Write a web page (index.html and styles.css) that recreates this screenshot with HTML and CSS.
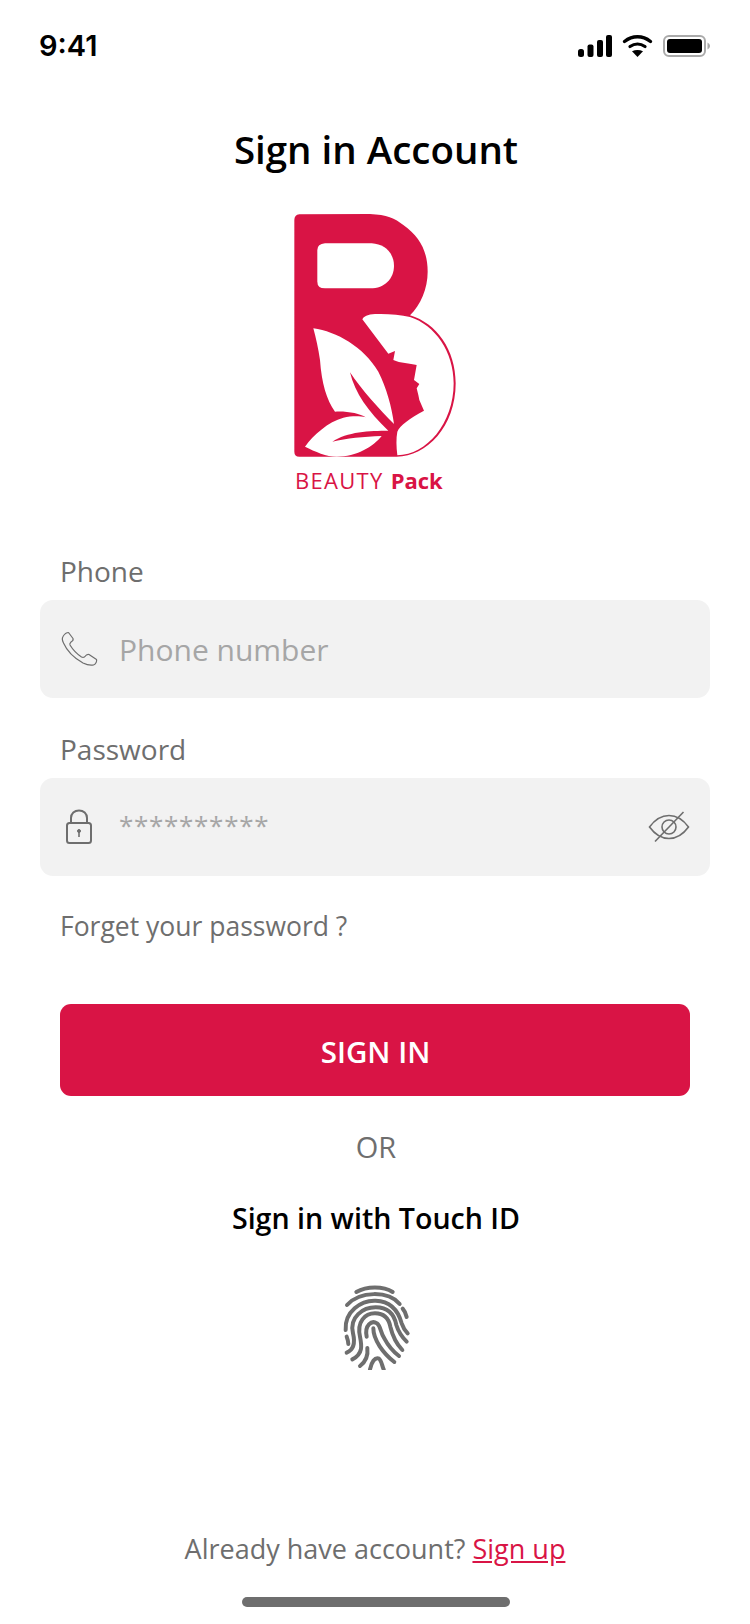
FILE: index.html
```html
<!DOCTYPE html>
<html lang="en">
<head>
<meta charset="utf-8">
<title>Sign in Account</title>
<link rel="stylesheet" href="styles.css">
</head>
<body>
<main class="screen">
  <header class="status">
    <span class="time">9:41</span>
    <span class="status-icons">
      <svg width="34" height="22" viewBox="0 0 34 22"><rect x="0" y="14" width="6" height="8" rx="2.500"/><rect x="9.500" y="9.500" width="6" height="12.500" rx="2"/><rect x="19" y="5" width="6" height="17" rx="2"/><rect x="28" y="0" width="6" height="22" rx="2"/></svg>
      <svg width="31" height="22" viewBox="0 0 31 22"><path d="M2.500 6.500C7 3 11 1.800 15.500 1.800S24 3 28.500 6.500" fill="none" stroke="#000" stroke-width="3.400" stroke-linecap="round"/><path d="M8 11.500C10.500 9.800 13 9 15.500 9S20.500 9.800 23 11.500" fill="none" stroke="#000" stroke-width="3.200" stroke-linecap="round"/><path d="M10 16.200L15.500 22L21 16.200C17.500 14.600 13.500 14.600 10 16.200Z"/></svg>
      <svg width="47" height="22" viewBox="0 0 47 22"><rect x="1" y="1" width="41" height="20" rx="5" fill="none" stroke="#aaa" stroke-width="2"/><rect x="4" y="4" width="35" height="14" rx="3"/><path d="M44.500 7.500v7c1.500-.7 2.500-2 2.500-3.500s-1-2.800-2.500-3.500Z" fill="#aaa"/></svg>
    </span>
  </header>

  <h1 class="title">Sign in Account</h1>

  <div class="logo">
    <svg width="230" height="300" viewBox="0 0 690 900">
      <path fill="#d91445" d="M118 43L330 42C380 44 405 55 430 75C480 110 503 155 503 215C503 265 482 315 450 346C530 370 587 450 587 550C587 680 500 770 410 770L118 770Q103 770 103 755L103 60Q103 45 118 43Z"/>
      <path fill="#fff" d="M195 130L335 130C375 132 402 160 402 197C402 235 375 265 330 265L195 265Q172 265 172 245L172 150Q172 132 195 130Z"/>
      <path fill="#fff" d="M307 358Q312 344 345 342C380 341 420 343 450 351C525 375 581 455 581 550C581 670 500 765 412 766C409 740 408 715 412 695C420 675 450 655 492 632L478 600L475 585L470 565L478 552L462 540L470 495C450 490 420 490 400 480L405 453L385 461Z"/>
      <path fill="#fff" transform="translate(120 330)" d="M40 55C110 65 190 110 235 185C260 235 275 290 282 342C240 300 185 240 150 187C165 250 205 305 265 362C210 362 140 365 97 395C140 385 190 380 245 378C220 410 170 440 110 440C80 440 45 425 15 410C40 375 85 335 130 323C155 318 180 318 197 322C180 310 140 303 105 305C80 270 65 220 60 150C55 115 48 85 40 55Z"/>
    </svg>
    <span class="logo-name">BEAUTY <b class="logo-bold">Pack</b></span>
  </div>

  <form class="form">
    <label class="label">Phone</label>
    <div class="field">
      <svg class="icon" width="38" height="38" viewBox="0 0 38 38" fill="none" stroke="#6e6e6e" stroke-width="1.200" stroke-linejoin="round"><path d="M3 6.500C2 8 2 10 3.500 13C7 21 14 28 23 33C27 35 31 35.500 33.500 35C36 34 37 31 36.500 29.500L29 24.500C27.500 24 26 25 24.500 27C23.500 27.500 22.500 27.500 21.500 27C17 24 13 20 10 15C9.500 14 10 13 11 12C13 11 13.500 10 13 8.500L8.500 2.500C6.500 2.500 4.500 4 3 6.500Z"/></svg>
      <span class="placeholder">Phone number</span>
    </div>
    <label class="label label-gap">Password</label>
    <div class="field">
      <svg class="icon" width="38" height="38" viewBox="0 0 38 38" fill="none" stroke="#6e6e6e" stroke-width="2"><rect x="7" y="15" width="24" height="20" rx="2.500"/><path d="M11 15V10C11 5.500 14.500 2.500 19 2.500S27 5.500 27 10V15"/><circle cx="19" cy="23" r="1.500" fill="#6e6e6e" stroke-width="1"/><path d="M19 23V29" stroke-width="1.600"/></svg>
      <span class="placeholder stars">**********</span>
      <svg class="eye" width="42" height="32" viewBox="0 0 42 32" fill="none" stroke="#6e6e6e" stroke-width="1.600"><path d="M1.500 16C7 8.500 14 4.500 21 4.500S35 8.500 40.500 16C35 23.500 28 27.500 21 27.500S7 23.500 1.500 16Z"/><circle cx="21" cy="16" r="7"/><path d="M7 30.500L35.500 1"/></svg>
    </div>
    <a class="forgot">Forget your password ?</a>
    <button class="submit" type="button">SIGN IN</button>
  </form>

  <p class="or">OR</p>
  <p class="touch">Sign in with Touch ID</p>

  <svg class="finger" width="100" height="100" viewBox="0 0 300 300" fill="none" stroke="#6e6e6e" stroke-width="12" stroke-linecap="round">
    <path d="M94 66C125 48 175 48 203 66"/>
    <path d="M66 105C105 62 190 62 224 102"/>
    <path d="M233 116C240 124 243 131 245 141"/>
    <path d="M62 180C58 125 108 90 152 92C205 94 222 130 230 160C234 172 240 182 248 190"/>
    <path d="M65 200C68 208 70 215 70 222"/>
    <path d="M65 248C90 238 90 215 84 190C72 140 115 112 152 112C190 112 208 135 214 165C220 185 232 202 245 215"/>
    <path d="M82 268C115 252 110 225 105 200C95 155 120 130 150 130C180 130 192 150 196 170C202 195 215 222 232 240"/>
    <path d="M105 288C122 275 130 258 127 234"/>
    <path d="M125 200C118 165 140 150 156 160C168 170 165 185 178 205C190 228 205 245 222 258"/>
    <path d="M145 175C145 210 175 250 208 276"/>
    <path d="M135 298C140 275 150 262 160 265C170 270 170 285 176 298"/>
  </svg>

  <p class="signup">Already have account? <a class="signup-link">Sign up</a></p>
  <div class="home"></div>
</main>
</body>
</html>
```

FILE: styles.css
```css
* { box-sizing: border-box; }
html, body { margin: 0; padding: 0; background: #fff; }
.screen {
  width: 750px;
  height: 1624px;
  display: flex;
  flex-direction: column;
  align-items: center;
  font-family: "Open Sans", "Noto Sans", sans-serif;
  color: #6e6e6e;
}
.status {
  width: 100%;
  height: 92px;
  padding: 26px 40px 0 39px;
  display: flex;
  justify-content: space-between;
  align-items: flex-start;
}
.time { font: 600 29px/40px "Inter", sans-serif; color: #000; }
.status-icons { display: flex; align-items: center; gap: 10px; height: 40px; }
.title {
  margin: 34px 0 0 2px;
  font-size: 38.500px;
  line-height: 46px;
  font-weight: 600;
  color: #000;
}
.logo { width: 230px; height: 300px; margin-top: 28px; position: relative; }
.logo svg { display: block; }
.logo-name {
  position: absolute;
  left: 35px;
  top: 265px;
  font-size: 22px;
  letter-spacing: 1.300px;
  line-height: 30px;
  color: #d91445;
  white-space: nowrap;
}
.logo-bold { font-weight: 700; letter-spacing: 0; }
.form { width: 670px; margin-top: 52px; display: flex; flex-direction: column; align-items: stretch; }
.label { padding-left: 20px; font-size: 28px; line-height: 38px; }
.label-gap { margin-top: 32px; }
.field {
  height: 98px;
  margin-top: 10px;
  background: #f2f2f2;
  border-radius: 13px;
  display: flex;
  align-items: center;
  padding: 0 20px;
}
.icon { flex: none; }
.placeholder { margin-left: 21px; font-size: 30px; color: #a6a6a6; }
.stars { font-size: 26px; letter-spacing: 0.700px; margin-top: -4px; }
.eye { margin-left: auto; flex: none; }
.forgot { margin-top: 32px; padding-left: 20px; font-size: 26.500px; line-height: 36px; }
.submit {
  width: 630px;
  height: 92px;
  margin: 60px 0 0 20px;
  padding: 3px 0 0 1px;
  border: 0;
  border-radius: 11px;
  background: #d91445;
  color: #fff;
  font: 600 29.500px/1 "Open Sans", "Noto Sans", sans-serif;
}
.or { margin: 32px 0 0 2px; font-size: 29px; line-height: 38px; }
.touch { margin: 32px 0 0 2px; font-size: 28.600px; line-height: 40px; font-weight: 600; color: #000; }
.finger { margin-top: 32px; flex: none; }
.signup { margin: 160px 0 0; font-size: 27px; line-height: 38px; }
.signup-link { color: #d91445; text-decoration: underline; }
.home { width: 268px; height: 10px; margin: 29px 0 0 2px; border-radius: 5px; background: #6e6e6e; }
```
